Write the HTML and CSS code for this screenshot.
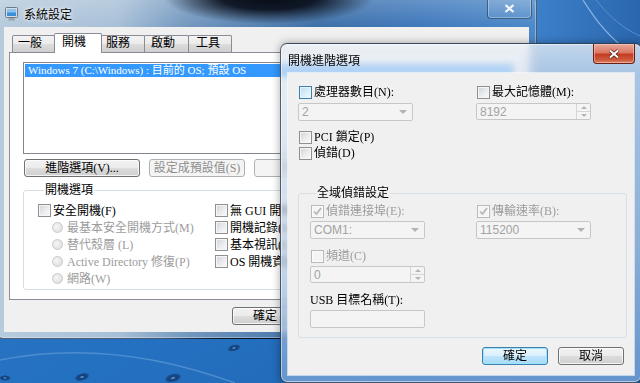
FILE: index.html
```html
<!DOCTYPE html>
<html lang="zh-Hant">
<head>
<meta charset="utf-8">
<title>系統設定</title>
<link rel="stylesheet" href="styles.css">
</head>
<body>
<svg class="wallpaper" width="640" height="383" viewBox="0 0 640 383" aria-hidden="true">
  <defs>
    <linearGradient id="wp" x1="0" y1="0" x2="1" y2="1">
      <stop offset="0" stop-color="#2f78c4"/>
      <stop offset="0.55" stop-color="#2571c1"/>
      <stop offset="1" stop-color="#1d62ae"/>
    </linearGradient>
    <linearGradient id="wpr" x1="0" y1="0" x2="1" y2="0">
      <stop offset="0" stop-color="#3e82cc"/>
      <stop offset="1" stop-color="#2a66ad"/>
    </linearGradient>
    <radialGradient id="drop">
      <stop offset="0" stop-color="#7bb3e8"/>
      <stop offset="0.35" stop-color="#123f78"/>
      <stop offset="0.8" stop-color="#184f93"/>
      <stop offset="1" stop-color="#2571c1" stop-opacity="0"/>
    </radialGradient>
  </defs>
  <rect width="640" height="383" fill="url(#wp)"/>
  <rect x="530" y="0" width="110" height="50" fill="url(#wpr)"/>
  <path d="M583 0 C 592 14, 602 30, 624 48" stroke="#9cc6ee" stroke-width="1.2" fill="none" opacity=".8"/>
  <path d="M596 0 C 606 12, 618 26, 640 36" stroke="#6fa6dd" stroke-width="1" fill="none" opacity=".6"/>
  <path d="M0 360 C 70 346, 150 352, 235 383" stroke="#5e9ad6" stroke-width="1.4" fill="none" opacity=".7"/>
  <ellipse cx="234" cy="348" rx="7" ry="3.5" transform="rotate(-15 234 348)" fill="url(#drop)"/>
  <ellipse cx="82" cy="377" rx="8" ry="4" transform="rotate(-15 82 377)" fill="url(#drop)"/>
  <ellipse cx="173" cy="378" rx="9" ry="4.5" transform="rotate(-15 173 378)" fill="url(#drop)"/>
  <ellipse cx="5" cy="378" rx="6" ry="3" fill="url(#drop)"/>
</svg>

<div class="win main">
  <div class="titlebar">
    <svg class="appicon" width="13" height="14" viewBox="0 0 13 14" aria-hidden="true">
      <rect x="0.5" y="0.5" width="12" height="10" rx="1" fill="#d7dde4" stroke="#6f7a86"/>
      <rect x="2" y="2" width="9" height="7" fill="#3d8ed8"/>
      <path d="M2 2h9v3.5H2z" fill="#8cc4f0"/>
      <path d="M4 11h5l1 2.5H3z" fill="#9aa4ae"/>
    </svg>
    <span class="title">系統設定</span>
    <div class="close inactive">
      <svg width="11" height="9" viewBox="0 0 11 9" aria-hidden="true"><path d="M1.5 1 L9.5 8 M9.5 1 L1.5 8" stroke="#f2f6fa" stroke-width="2.2"/></svg>
    </div>
  </div>
  <div class="client">
    <div class="tabctl">
      <div class="tabs">
        <div class="tab t1">一般</div>
        <div class="tab t2 sel">開機</div>
        <div class="tab t3">服務</div>
        <div class="tab t4">啟動</div>
        <div class="tab t5">工具</div>
      </div>
      <div class="tabpage">
        <div class="listbox">
          <div class="item sel">Windows 7 (C:\Windows) : 目前的 OS; 預設 OS</div>
        </div>
        <div class="btnrow">
          <div class="btn w116">進階選項(V)...</div>
          <div class="btn dis w96">設定成預設值(S)</div>
          <div class="btn dis w96">刪除(D)</div>
        </div>
        <fieldset class="group bootopts">
          <legend>開機選項</legend>
          <div class="bootgrid">
            <div class="col">
              <label class="opt"><span class="cb"></span><span>安全開機(F)</span></label>
              <label class="opt sub dis"><span class="rb"></span><span>最基本安全開機方式(M)</span></label>
              <label class="opt sub dis"><span class="rb"></span><span>替代殼層 (L)</span></label>
              <label class="opt sub dis"><span class="rb"></span><span>Active Directory 修復(P)</span></label>
              <label class="opt sub dis"><span class="rb"></span><span>網路(W)</span></label>
            </div>
            <div class="col">
              <label class="opt"><span class="cb"></span><span>無 GUI 開機(N)</span></label>
              <label class="opt"><span class="cb"></span><span>開機記錄(B)</span></label>
              <label class="opt"><span class="cb"></span><span>基本視訊(E)</span></label>
              <label class="opt"><span class="cb"></span><span>OS 開機資訊(O)</span></label>
            </div>
          </div>
        </fieldset>
      </div>
    </div>
    <div class="footer">
      <div class="btn w66">確定</div>
      <div class="btn w66">取消</div>
      <div class="btn dis w66">套用(A)</div>
      <div class="btn w66">說明</div>
    </div>
  </div>
</div>

<div class="win dlg">
  <div class="titlebar">
    <span class="title">開機進階選項</span>
    <div class="close active">
      <svg width="12" height="10" viewBox="0 0 12 10" aria-hidden="true"><path d="M2 1.5 L10 8.5 M10 1.5 L2 8.5" stroke="#4a1a12" stroke-width="3.4"/><path d="M2 1.5 L10 8.5 M10 1.5 L2 8.5" stroke="#ffffff" stroke-width="2"/></svg>
    </div>
  </div>
  <div class="client">
    <div class="topgrid">
      <label class="opt c1"><span class="cb hot"></span><span>處理器數目(N):</span></label>
      <label class="opt c1"><span class="cb"></span><span>最大記憶體(M):</span></label>
      <div class="combo dis"><span>2</span><i class="arrow"></i></div>
      <div class="spin dis"><span>8192</span><span class="spinbtns"><i class="up"></i><i class="dn"></i></span></div>
      <label class="opt c1 gap"><span class="cb"></span><span>PCI 鎖定(P)</span></label>
      <span></span>
      <label class="opt c1"><span class="cb"></span><span>偵錯(D)</span></label>
      <span></span>
    </div>
    <fieldset class="group debug">
      <legend>全域偵錯設定</legend>
      <div class="dbggrid">
        <label class="opt c1 dis"><span class="cb dis checked"><svg width="11" height="11" viewBox="0 0 11 11" aria-hidden="true"><path d="M2 5.5 L4.5 8 L9 2" stroke="#b4b4b4" stroke-width="1.6" fill="none"/></svg></span><span>偵錯連接埠(E):</span></label>
        <label class="opt c1 dis"><span class="cb dis checked"><svg width="11" height="11" viewBox="0 0 11 11" aria-hidden="true"><path d="M2 5.5 L4.5 8 L9 2" stroke="#b4b4b4" stroke-width="1.6" fill="none"/></svg></span><span>傳輸速率(B):</span></label>
        <div class="combo dis"><span>COM1:</span><i class="arrow"></i></div>
        <div class="combo dis"><span>115200</span><i class="arrow"></i></div>
        <label class="opt c1 dis gap"><span class="cb dis"></span><span>頻道(C)</span></label>
        <span></span>
        <div class="spin dis"><span>0</span><span class="spinbtns"><i class="up"></i><i class="dn"></i></span></div>
        <span></span>
        <div class="lbl gap">USB 目標名稱(T):</div>
        <span></span>
        <div class="textbox dis"></div>
        <span></span>
      </div>
    </fieldset>
    <div class="dlgbtns">
      <div class="btn w66 def">確定</div>
      <div class="btn w66">取消</div>
    </div>
  </div>
</div>
</body>
</html>
```

FILE: styles.css
```css
* { box-sizing: border-box; }
html, body { margin: 0; padding: 0; }
body {
  width: 640px; height: 383px; overflow: hidden; position: relative;
  background: #2571c1;
  font-family: "Liberation Serif", "Noto Sans CJK TC", serif;
  font-size: 12px; line-height: 16px; color: #000;
}
.wallpaper { position: absolute; left: 0; top: 0; display: block; }

/* ---------- windows ---------- */
.win { position: absolute; display: flex; flex-direction: column; }
.main {
  left: -4px; top: -5px; width: 541px; height: 344px;
  padding: 0 7px 6px 7px;
  border: 1px solid rgba(8, 18, 36, .6);
  border-radius: 7px;
  background:
    radial-gradient(ellipse 105px 26px at 272px 2px, rgba(4,8,16,.97) 0%, rgba(6,12,24,.9) 45%, rgba(6,12,24,0) 100%),
    linear-gradient(to bottom, rgba(255,255,255,.22), rgba(255,255,255,0) 30px),
    linear-gradient(to right, #b7cbdd 0px, #a8c0d7 120px, #7398bf 190px, #3f70a7 320px, #4079bb 420px, #4d8ac9 541px);
  z-index: 1;
  box-shadow: inset 0 0 0 1px rgba(255,255,255,.35);
}
.dlg {
  left: 280px; top: 43px; width: 362px; height: 340px;
  padding: 0 7px 7px 7px;
  border: 1px solid rgba(8, 18, 36, .65);
  border-radius: 7px;
  background:
    linear-gradient(to bottom, rgba(236,241,247,.78) 0px, rgba(220,230,241,.72) 30px, rgba(186,205,227,.7) 200px, rgba(120,162,212,.78) 340px);
  backdrop-filter: blur(3px);
  box-shadow: inset 0 0 0 1px rgba(255,255,255,.5), 0 0 8px rgba(0,0,0,.35);
  z-index: 2;
}
.titlebar { display: flex; align-items: center; flex: none; }
.main .titlebar { height: 31px; margin: 0 -7px; padding: 10px 0 0 8px; align-items: flex-start; }
.dlg .titlebar { height: 29px; padding-top: 8px; align-items: flex-start; }
.appicon { display: block; margin-top: 1px; flex: none; }
.title {
  font-family: "Noto Sans CJK TC", sans-serif; font-size: 12px; line-height: 15px; color: #000;
}
.main .title { margin-left: 6px; text-shadow: 0 0 6px rgba(255,255,255,.9), 0 0 3px rgba(255,255,255,.9); }
.close {
  margin-left: auto; display: flex; align-items: center; justify-content: center;
  border-radius: 0 0 4px 4px;
}
.close.inactive {
  width: 45px; height: 23px; margin-top: -10px; margin-right: 4px;
  border: 1px solid rgba(20,40,70,.55); border-top: none;
  background: linear-gradient(rgba(255,255,255,.18), rgba(255,255,255,.05));
  box-shadow: inset 0 0 0 1px rgba(255,255,255,.3);
  padding-top: 3px;
}
.close.active {
  width: 42px; height: 20px; margin-top: -8px; margin-right: -1px;
  border: 1px solid #6a1e14; border-top: none;
  background: linear-gradient(#e9a99a 0%, #da7862 45%, #c43c22 55%, #cf5b3f 85%, #e08a70 100%);
  box-shadow: inset 0 0 0 1px rgba(255,220,210,.45);
}
.client { flex: 1; background: #f0f0f0; display: flex; flex-direction: column; }

/* ---------- main window ---------- */
.tabctl { margin: 6px 0 0 5px; width: 514px; }
.tabs { display: flex; align-items: flex-end; height: 19px; padding-left: 3px; }
.tab {
  height: 17px; border: 1px solid #898c95; border-bottom: none;
  background: linear-gradient(#f3f3f3 0%, #ebebeb 50%, #dddddd 51%, #cfcfcf 100%);
  padding-left: 5px; line-height: 15px; margin-left: -1px; position: relative;
  border-radius: 2px 2px 0 0;
}
.tab.t1 { width: 43px; margin-left: 0; }
.tab.t2 { width: 48px; padding-left: 7px; }
.tab.t3 { width: 44px; padding-left: 4px; }
.tab.t4 { width: 45px; padding-left: 6px; }
.tab.t5 { width: 44px; padding-left: 7px; }
.tab.sel {
  height: 20px; background: #fff; z-index: 2; margin-bottom: -1px; line-height: 17px;
}
.tabpage {
  height: 248px; border: 1px solid #898c95; background: #fff;
  padding: 9px 0 0 13px;
}
.listbox { width: 492px; height: 92px; border: 1px solid #828790; background: #fff; padding: 1px; }
.item { height: 13px; line-height: 13px; padding-left: 3px; white-space: nowrap; font-size: 11px; }
.item.sel { background: #3399ff; color: #fff; }
.btnrow { display: flex; gap: 9px; margin: 5px 0 0 1px; }

.btn {
  height: 18px; border: 1px solid #707070; border-radius: 3px;
  background: linear-gradient(#f2f2f2 0%, #ebebeb 50%, #dddddd 51%, #cfcfcf 100%);
  box-shadow: inset 0 0 0 1px rgba(255,255,255,.75);
  display: flex; align-items: center; justify-content: center;
  line-height: 16px; white-space: nowrap; flex: none;
}
.btn.dis { border-color: #adb2b5; background: #f4f4f4; color: #8d8d8d; box-shadow: none; }
.btn.def {
  border-color: #3c7fb1;
  background: linear-gradient(#eaf6fd 0%, #d9f0fc 50%, #bee6fd 51%, #a7d9f5 100%);
  box-shadow: inset 0 0 0 1px #9ee3fb;
}
.w116 { width: 116px; }
.w96 { width: 96px; }
.w66 { width: 66px; }

.group {
  margin: 0; border: 1px solid #d5dfe5; border-radius: 3px; min-width: 0;
}
.group legend { padding: 0 1px; line-height: 14px; margin-left: 6px; }
.bootopts { margin-top: 6px; width: 492px; height: 107px; padding: 5px 0 0 14px; }
.bootgrid { display: grid; grid-template-columns: 177px 1fr; }
.col { display: flex; flex-direction: column; }
.opt { display: flex; align-items: center; gap: 2px; height: 17px; white-space: nowrap; }
.opt.sub { margin-left: 14px; gap: 4px; }
.opt.dis { color: #9c9c9c; }

.cb {
  width: 13px; height: 13px; flex: none; border: 1px solid #8e8f8f;
  background: linear-gradient(135deg, #d1d4d8 0%, #eceef0 60%, #f8f8f8 100%);
  box-shadow: inset 0 0 0 1px #f6f6f6;
  display: flex; align-items: center; justify-content: center;
}
.cb.hot {
  border-color: #3c7fb1;
  background: linear-gradient(135deg, #b9dcf4 0%, #def0fb 60%, #f1f9fe 100%);
  box-shadow: inset 0 0 0 1px #e6f4fc;
}
.cb.dis { border-color: #b9b9b9; background: #f4f4f4; box-shadow: inset 0 0 0 1px #fbfbfb; }
.cb svg { display: block; }
.rb {
  width: 11px; height: 11px; flex: none; border-radius: 50%;
  border: 1px solid #c9c9c9;
  background: radial-gradient(circle at 40% 40%, #f6f6f6 0%, #e2e2e2 70%, #d6d6d6 100%);
}

.footer { display: flex; justify-content: flex-end; gap: 7px; margin-top: 7px; padding-right: 12px; }

/* ---------- dialog ---------- */
.dlg .client {
  padding: 11px 0 0 10px;
  box-shadow: 0 0 0 1px rgba(255,255,255,.6);
}
.topgrid {
  display: grid; grid-template-columns: 115px 115px; column-gap: 63px;
  grid-auto-rows: auto;
}
.opt.c1 { height: 16px; margin-left: 1px; }
.topgrid .combo, .topgrid .spin { margin-top: 3px; }
.topgrid .opt.gap { margin-top: 8px; }
.topgrid .gap + span { margin-top: 8px; }

.combo, .spin, .textbox {
  height: 18px; border: 1px solid #c7c7c7; border-radius: 2px; background: #f4f4f4;
  display: flex; align-items: center; padding-left: 3px;
  font-family: "Liberation Sans", "Noto Sans CJK TC", sans-serif; font-size: 12px; color: #a3a3a3;
  position: relative;
}
.combo .arrow {
  margin-left: auto; margin-right: 5px; width: 0; height: 0;
  border-left: 4px solid transparent; border-right: 4px solid transparent; border-top: 4px solid #b3b3b3;
}
.spin { height: 17px; padding-right: 0; }
.spinbtns {
  margin-left: auto; width: 14px; height: 15px; display: flex; flex-direction: column;
  border-left: 1px solid #d6d6d6;
}
.spinbtns i { flex: 1; display: flex; align-items: center; justify-content: center; }
.spinbtns i.up { border-bottom: 1px solid #d6d6d6; }
.spinbtns i::before {
  content: ""; width: 0; height: 0;
  border-left: 3px solid transparent; border-right: 3px solid transparent;
}
.spinbtns i.up::before { border-bottom: 3px solid #b5b5b5; }
.spinbtns i.dn::before { border-top: 3px solid #b5b5b5; }

.debug { margin-top: 25px; width: 329px; height: 152px; padding: 3px 0 0 11px; }
.dbggrid { display: grid; grid-template-columns: 115px 115px; column-gap: 51px; }
.dbggrid .combo { margin-top: 2px; }
.dbggrid .spin, .dbggrid .textbox { margin-top: 2px; }
.dbggrid .gap { margin-top: 9px; }
.lbl { height: 16px; line-height: 16px; white-space: nowrap; }
.textbox { height: 18px; }

.dlgbtns { display: flex; justify-content: flex-end; gap: 10px; margin-top: 9px; padding-right: 10px; }
```
